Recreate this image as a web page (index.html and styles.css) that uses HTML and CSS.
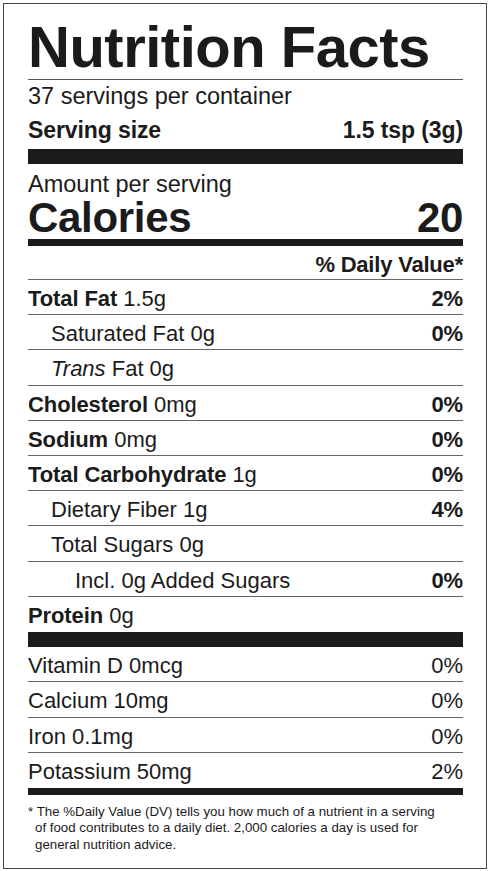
FILE: index.html
```
<!doctype html>
<html>
    <head>
        <meta charset="utf-8" />
        <title>Nutrition Facts</title>
        <link rel="stylesheet" href="styles.css">
    </head>
    <body>
        <div class="label">
            <h1 class="title">Nutrition Facts</h1>

            <div class="servings">
                <p class="count">37 servings per container</p>
                <p class="size"><span>Serving size</span><span>1.5 tsp (3g)</span></p>
            </div>

            <div class="calories">
                <p class="amount">Amount per serving</p>
                <p class="cal-row"><span>Calories</span><span>20</span></p>
            </div>

            <p class="dv-head">% Daily Value*</p>

            <ul class="nutrients">
                <li class="row"><span><b>Total Fat</b> 1.5g</span><b>2%</b></li>
                <li class="row sub"><span>Saturated Fat 0g</span><b>0%</b></li>
                <li class="row sub"><span><i>Trans</i> Fat 0g</span></li>
                <li class="row"><span><b>Cholesterol</b> 0mg</span><b>0%</b></li>
                <li class="row"><span><b>Sodium</b> 0mg</span><b>0%</b></li>
                <li class="row"><span><b>Total Carbohydrate</b> 1g</span><b>0%</b></li>
                <li class="row sub"><span>Dietary Fiber 1g</span><b>4%</b></li>
                <li class="row sub"><span>Total Sugars 0g</span></li>
                <li class="row sub2"><span>Incl. 0g Added Sugars</span><b>0%</b></li>
                <li class="row"><span><b>Protein</b> 0g</span></li>
            </ul>

            <ul class="vitamins">
                <li class="row"><span>Vitamin D 0mcg</span><span>0%</span></li>
                <li class="row"><span>Calcium 10mg</span><span>0%</span></li>
                <li class="row"><span>Iron 0.1mg</span><span>0%</span></li>
                <li class="row"><span>Potassium 50mg</span><span>2%</span></li>
            </ul>

            <p class="footnote">* The %Daily Value (DV) tells you how much of a nutrient in a serving of food contributes to a daily diet. 2,000 calories a day is used for general nutrition advice.</p>
        </div>
    </body>
</html>
```

FILE: styles.css
```
* {
    margin: 0;
    padding: 0;
    box-sizing: border-box;
}

body {
    background: #fff;
    color: #1b1b1b;
    font-family: "Liberation Sans", Arial, sans-serif;
}

b {
    font-weight: bold;
    letter-spacing: -0.1px;
}

.label {
    margin: 3px;
    width: 484px;
    height: 866px;
    border: 1px solid #444;
    padding: 0 23px 0 24px;
}

.title {
    font-size: 58px;
    line-height: 58px;
    font-weight: bold;
    letter-spacing: -0.5px;
    padding: 14px 0 3px;
    border-bottom: 1px solid #555;
}

.servings {
    border-bottom: 15px solid #1b1b1b;
}

.count {
    font-size: 23.5px;
    line-height: 32px;
}

.size {
    display: flex;
    justify-content: space-between;
    font-size: 23px;
    line-height: 37px;
    font-weight: bold;
    letter-spacing: -0.1px;
}

.calories {
    padding-top: 7px;
    border-bottom: 7px solid #1b1b1b;
}

.amount {
    font-size: 23.5px;
    line-height: 26px;
}

.cal-row {
    display: flex;
    justify-content: space-between;
    font-size: 42px;
    line-height: 42px;
    font-weight: bold;
    letter-spacing: -0.3px;
}

.dv-head {
    text-align: right;
    font-size: 22px;
    line-height: 24px;
    font-weight: bold;
    letter-spacing: -0.2px;
    padding: 7px 0 2px;
    border-bottom: 1px solid #666;
}

.nutrients,
.vitamins {
    list-style: none;
}

.nutrients {
    border-bottom: 15px solid #1b1b1b;
}

.vitamins {
    border-bottom: 7px solid #1b1b1b;
}

.row {
    display: flex;
    justify-content: space-between;
    font-size: 22px;
    border-bottom: 1px solid #666;
}

.nutrients .row {
    padding-top: 3px;
    line-height: 31.2px;
}

.vitamins .row {
    padding-top: 4px;
    line-height: 30.5px;
}

.row:last-child {
    border-bottom: none;
}

.nutrients .row:last-child {
    height: 35px;
}

.row.sub {
    padding-left: 23px;
}

.row.sub2 {
    padding-left: 47px;
}

.footnote {
    font-size: 13.3px;
    line-height: 16.5px;
    padding: 9px 0 0 7px;
    text-indent: -7px;
    max-width: 414px;
}
```
